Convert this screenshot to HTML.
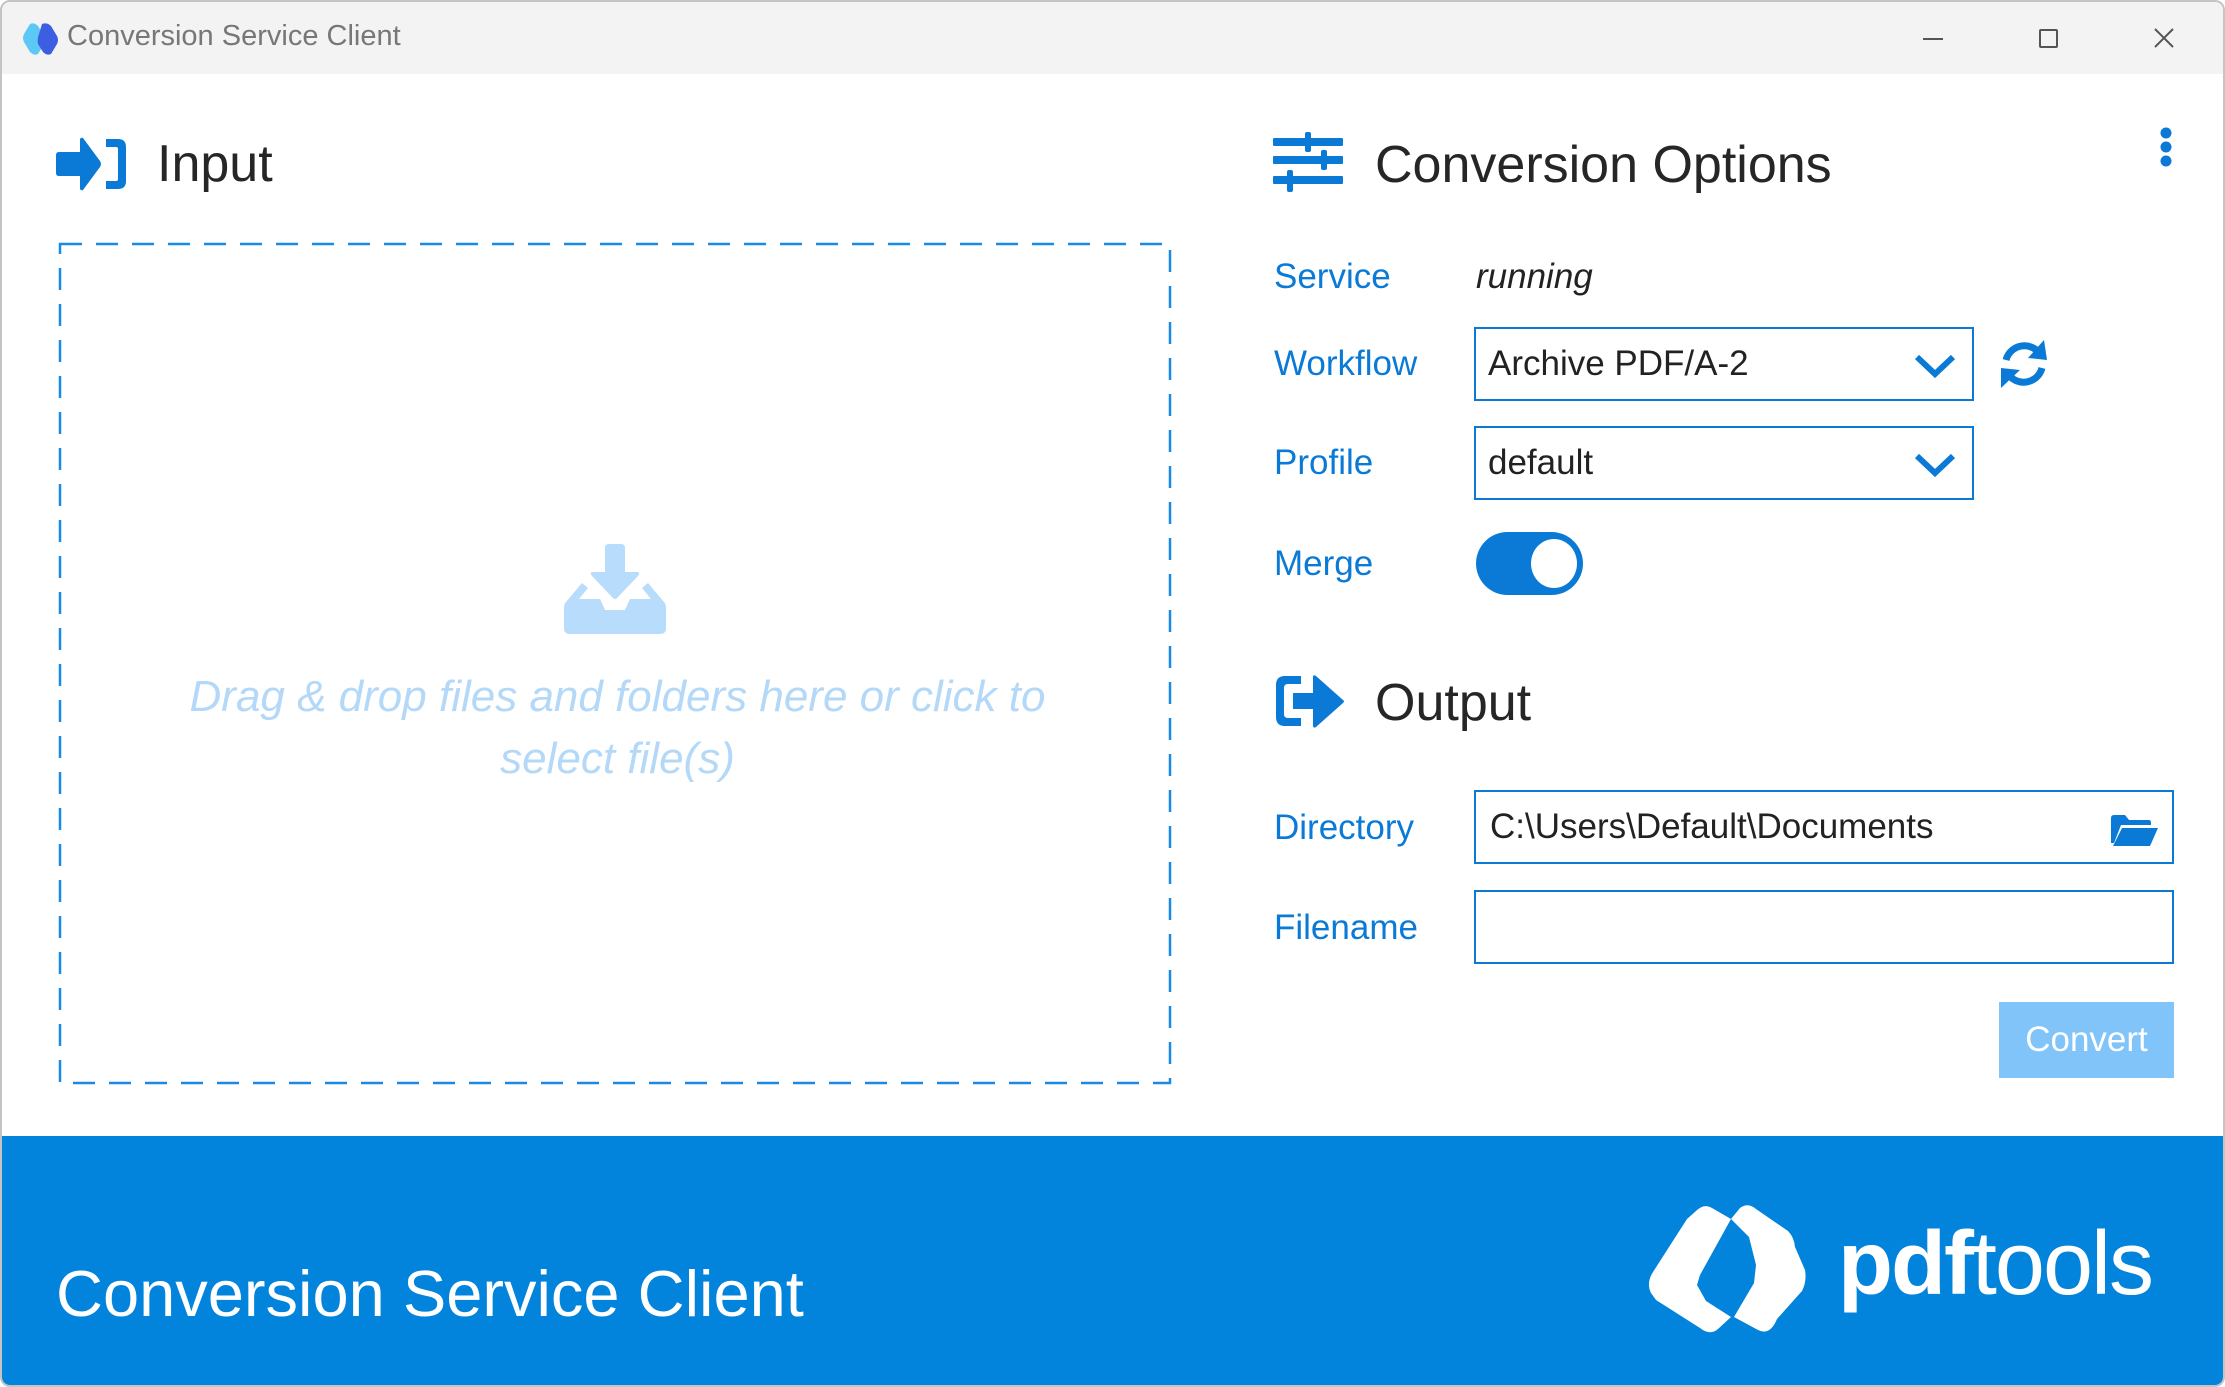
<!DOCTYPE html>
<html><head><meta charset="utf-8"><style>
*{margin:0;padding:0;box-sizing:border-box}
body{width:2225px;height:1387px;background:#fff;font-family:"Liberation Sans","DejaVu Sans",sans-serif;position:relative;overflow:hidden}
.win{position:absolute;left:0;top:0;width:2225px;height:1387px;border:2px solid #c4c4c4;border-radius:10px;overflow:hidden;background:#fff}
.tb{position:absolute;left:0;top:0;right:0;height:72px;background:#f3f3f3}
.abs{position:absolute}
.lbl{position:absolute;left:1272px;color:#0a7ad6;font-size:35px;line-height:40px}
.box{position:absolute;left:1472px;width:500px;height:74px;border:2px solid #0a7ad6;background:#fff;font-size:35px;color:#222;padding-left:12px;line-height:70px}
h1{position:absolute;font-weight:normal;font-size:52px;color:#262626;line-height:60px}
</style></head><body>
<div class="win">
<div class="tb">
 <svg class="abs" style="left:20px;top:20px" width="40" height="34" viewBox="0 0 40 34"><path d="M8 2 Q12 0 16 4 L22 14 Q24 18 22 22 L16 32 Q12 34 8 30 L2 20 Q0 16 2 12Z" fill="#5cc8f5"/><path d="M20 2 Q25 0 29 4 L35 14 Q37 18 35 22 L29 32 Q25 34 21 30 L16 22 Q15 17 17 12Z" fill="#3b5fe0"/></svg>
 <div class="abs" style="left:65px;top:18px;font-size:29px;color:#777">Conversion Service Client</div>
 <div class="abs" style="left:1921px;top:36px;width:20px;height:2px;background:#555"></div>
 <div class="abs" style="left:2037px;top:27px;width:19px;height:19px;border:2px solid #555;border-radius:2px"></div>
 <svg class="abs" style="left:2152px;top:26px" width="20" height="20"><path d="M1 1L19 19M19 1L1 19" stroke="#555" stroke-width="2"/></svg>
</div>

<svg class="abs" style="left:54px;top:135px" width="72" height="54" viewBox="0 0 72 54"><path d="M0 18 Q0 15 3 15 L24 15 L24 3 Q24 0 27 1 L44 24 Q46 27 44 30 L27 53 Q24 54 24 51 L24 39 L3 39 Q0 39 0 36Z" fill="#0a7ad6"/><path d="M50 2 L62 2 Q70 2 70 10 L70 44 Q70 52 62 52 L50 52 L50 44 L60 44 Q62 44 62 42 L62 12 Q62 10 60 10 L50 10Z" fill="#0a7ad6"/></svg>
<h1 style="left:155px;top:132px">Input</h1>

<svg class="abs" style="left:56px;top:240px" width="1114" height="843"><rect x="2" y="2" width="1110" height="839" fill="none" stroke="#1a8ae8" stroke-width="2.5" stroke-dasharray="22 14"/></svg>

<svg class="abs" style="left:562px;top:542px" width="102" height="90" viewBox="0 0 102 90"><path d="M41 4 Q41 0 45 0 L57 0 Q61 0 61 4 L61 28 L73 28 Q77 28 74 32 L53 54 Q51 56 49 54 L28 32 Q25 28 29 28 L41 28Z" fill="#b8dcfc"/><path d="M18 39 L24 44 L15 55 L36 55 L41 66 L61 66 L66 55 L87 55 L78 44 L84 39 L100 58 Q102 60 102 64 L102 84 Q102 90 96 90 L6 90 Q0 90 0 84 L0 64 Q0 60 2 58Z" fill="#b8dcfc"/></svg>
<div class="abs" style="left:148px;top:664px;width:935px;text-align:center;font-size:44px;line-height:62px;font-style:italic;color:#b3d8f8">Drag &amp; drop files and folders here or click to select file(s)</div>

<svg class="abs" style="left:1271px;top:130px" width="72" height="60" viewBox="0 0 72 60"><g fill="#0a7ad6"><rect x="0" y="6" width="70" height="8" rx="1"/><rect x="0" y="24" width="70" height="8" rx="1"/><rect x="0" y="44" width="70" height="8" rx="1"/><rect x="32" y="0" width="6" height="20" rx="2"/><rect x="48" y="18" width="6" height="20" rx="2"/><rect x="14" y="38" width="6" height="22" rx="2"/></g></svg>
<h1 style="left:1373px;top:133px">Conversion Options</h1>
<svg class="abs" style="left:2156px;top:124px" width="16" height="42"><circle cx="8" cy="7" r="5.5" fill="#0a7ad6"/><circle cx="8" cy="21" r="5.5" fill="#0a7ad6"/><circle cx="8" cy="35" r="5.5" fill="#0a7ad6"/></svg>

<div class="lbl" style="top:255px">Service</div>
<div class="abs" style="left:1474px;top:255px;font-size:35px;line-height:40px;font-style:italic;color:#222">running</div>
<div class="lbl" style="top:342px">Workflow</div>
<div class="box" style="top:325px">Archive PDF/A-2</div>
<svg class="abs" style="left:1912px;top:352px" width="42" height="24"><path d="M3 3L21 20L39 3" fill="none" stroke="#0a7ad6" stroke-width="6"/></svg>
<svg class="abs" style="left:1996px;top:336px" width="52" height="52" viewBox="0 0 52 52"><path d="M8 22 A19 19 0 0 1 42 16" fill="none" stroke="#0a7ad6" stroke-width="7"/><path d="M44 30 A19 19 0 0 1 10 36" fill="none" stroke="#0a7ad6" stroke-width="7"/><path d="M46 2 L49 22 L30 20Z" fill="#0a7ad6"/><path d="M3 50 L3 30 L22 32Z" fill="#0a7ad6"/></svg>
<div class="lbl" style="top:441px">Profile</div>
<div class="box" style="top:424px">default</div>
<svg class="abs" style="left:1912px;top:451px" width="42" height="24"><path d="M3 3L21 20L39 3" fill="none" stroke="#0a7ad6" stroke-width="6"/></svg>
<div class="lbl" style="top:542px">Merge</div>
<div class="abs" style="left:1474px;top:530px;width:107px;height:63px;border-radius:32px;background:#0a7ad6"></div>
<div class="abs" style="left:1529px;top:537px;width:46px;height:49px;border-radius:50%;background:#fff"></div>

<svg class="abs" style="left:1271px;top:671px" width="72" height="56" viewBox="0 0 72 56"><path d="M28 3 L12 3 Q3 3 3 12 L3 44 Q3 53 12 53 L28 53 L28 45 L15 45 Q11 45 11 41 L11 15 Q11 11 15 11 L28 11Z" fill="#0a7ad6"/><path d="M20 20 L40 20 L40 4 Q40 1 43 3 L70 27 Q72 28 70 30 L43 54 Q40 56 40 52 L40 36 L20 36Z" fill="#0a7ad6"/></svg>
<h1 style="left:1373px;top:671px">Output</h1>

<div class="lbl" style="top:806px">Directory</div>
<div class="box" style="top:788px;width:700px;padding-left:14px">C:\Users\Default\Documents</div>
<svg class="abs" style="left:2109px;top:813px" width="48" height="32" viewBox="0 0 48 32"><path d="M0 3 Q0 0 3 0 L14 0 L18 5 L38 5 Q40 5 40 8 L40 10 L10 10 L3 28 L0 28Z" fill="#0a7ad6"/><path d="M11 13 L47 13 L39 31 L2 31Z" fill="#0a7ad6"/></svg>
<div class="lbl" style="top:906px">Filename</div>
<div class="box" style="top:888px;width:700px"></div>
<div class="abs" style="left:1997px;top:1000px;width:175px;height:76px;background:#80c4fa;color:#fff;font-size:35px;line-height:76px;text-align:center">Convert</div>

<div class="abs" style="left:0;top:1134px;width:2225px;height:253px;background:#0283dc"></div>
<div class="abs" style="left:54px;top:1254px;font-size:65px;line-height:75px;color:#fff">Conversion Service Client</div>
<svg class="abs" style="left:1646px;top:1203px" width="160" height="130" viewBox="0 0 160 130"><path d="M83 14 L64 3 Q56 -2 48 6 L39 14 L5 67 Q-2 78 3 88 L8 95 L52 123 Q62 131 70 124 L83 112 L58 96 L49 80 L52 70 Z" fill="#fff"/><path d="M83 14 L92 3 Q100 -3 108 4 L140 26 Q146 32 147 42 L157 65 Q159 76 154 86 L129 114 Q122 131 110 125 L86 112 L106 78 L108 60 L101 32 Z" fill="#fff"/></svg>
<div class="abs" style="left:1836px;top:1212px;font-size:90px;line-height:100px;color:#fff;letter-spacing:-2px"><b>pdf</b>tools</div>
</div>
</body></html>
